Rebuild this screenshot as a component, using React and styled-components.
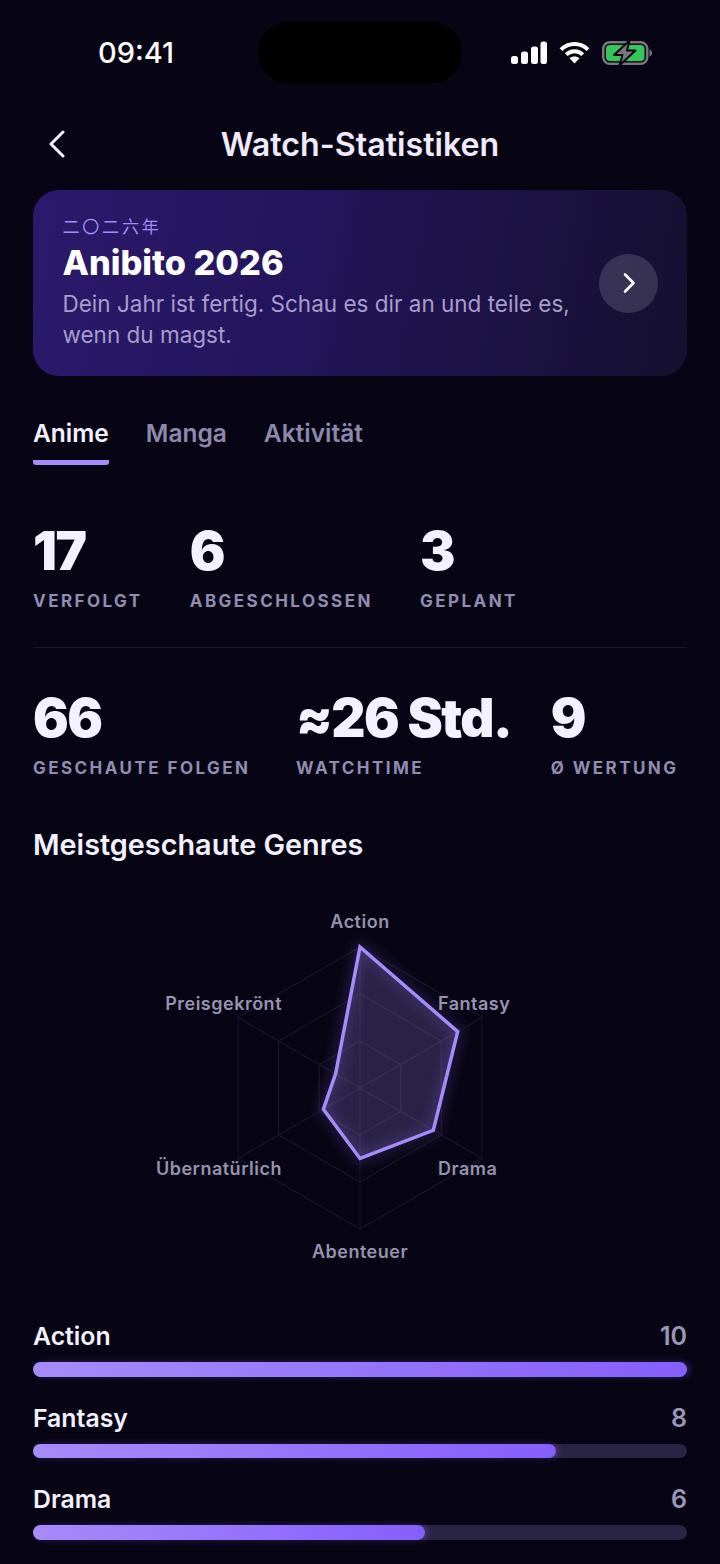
import React from "react";
import styled, { createGlobalStyle } from "styled-components";

const GlobalStyle = createGlobalStyle`
  html, body {
    margin: 0;
    padding: 0;
    background: #070514;
  }
  * {
    box-sizing: border-box;
  }
`;

const Page = styled.div`
  width: 720px;
  height: 1564px;
  overflow: hidden;
  background: #070514;
  color: #f3f0ff;
  font-family: Inter, "Noto Sans CJK SC", sans-serif;
`;

const StatusBar = styled.div`
  height: 106px;
  padding: 22px 0 0 98px;
  display: flex;
  align-items: flex-start;
`;

const Time = styled.div`
  width: 160px;
  height: 61px;
  line-height: 62px;
  font-size: 29px;
  font-weight: 500;
  color: #fff;
`;

const Island = styled.div`
  width: 204px;
  height: 61px;
  border-radius: 30px;
  background: #000;
`;

const StatusIcons = styled.div`
  margin-left: 49px;
  height: 61px;
  display: flex;
  align-items: center;
  gap: 12px;
`;

const NavBar = styled.div`
  height: 84px;
  padding: 0 33px 8px;
  display: grid;
  grid-template-columns: 60px 1fr 60px;
  align-items: center;
`;

const BackButton = styled.div`
  display: flex;
  align-items: center;
  padding-left: 15px;
`;

const NavTitle = styled.div`
  text-align: center;
  font-size: 32.2px;
  font-weight: 600;
  color: #efebfc;
`;

const Content = styled.div`
  padding: 0 33px;
`;

const YearCard = styled.div`
  height: 186px;
  border-radius: 26px;
  padding: 26px 29px 0 29.5px;
  display: flex;
  justify-content: space-between;
  align-items: center;
  background: linear-gradient(100deg, #2b1a6c 0%, #23155c 40%, #15102f 100%);
`;

const CardText = styled.div`
  align-self: flex-start;
`;

const YearLabel = styled.div`
  font-size: 17px;
  line-height: 22px;
  letter-spacing: 2.8px;
  color: #a78bfa;
`;

const CardTitle = styled.div`
  font-size: 34.3px;
  line-height: 48px;
  font-weight: 800;
  color: #fff;
  padding-top: 1px;
`;

const CardBody = styled.div`
  width: 530px;
  font-size: 22.5px;
  line-height: 31px;
  color: #a99dca;
  margin-top: 1px;
`;

const CircleButton = styled.div`
  width: 59px;
  height: 59px;
  border-radius: 50%;
  background: rgba(255, 255, 255, 0.14);
  display: flex;
  align-items: center;
  justify-content: center;
  margin-top: -26px;
  flex: none;
`;

const Tabs = styled.div`
  display: flex;
  gap: 37px;
  margin-top: 40px;
`;

const Tab = styled.div`
  font-size: 24.5px;
  line-height: 34px;
  font-weight: 600;
  padding-bottom: 10px;
  color: ${(p) => (p.$active ? "#f3f0ff" : "#8d88ae")};
  border-bottom: 5px solid ${(p) => (p.$active ? "#a78bfa" : "transparent")};
  border-radius: 0 0 3px 3px;
`;

const StatRow = styled.div`
  display: flex;
  gap: ${(p) => p.$gap}px;
  padding-top: ${(p) => p.$top}px;
  padding-bottom: ${(p) => p.$bottom}px;
  border-bottom: ${(p) => (p.$divider ? "1px solid #1b1830" : "none")};
`;

const Stat = styled.div`
  display: flex;
  flex-direction: column;
  width: ${(p) => (p.$width ? `${p.$width}px` : "auto")};
  white-space: nowrap;
`;

const StatValue = styled.div`
  font-size: 53px;
  line-height: 60px;
  font-weight: 900;
  letter-spacing: -1.5px;
  color: #f3f0ff;
`;

const StatLabel = styled.div`
  font-size: 17px;
  line-height: 24px;
  font-weight: 700;
  letter-spacing: 2.45px;
  color: #918cb2;
  margin-top: 8px;
`;

const SectionTitle = styled.div`
  font-size: 28.8px;
  line-height: 36px;
  font-weight: 600;
  color: #f3f0ff;
  margin-top: 47px;
`;

const RadarBox = styled.div`
  height: 419px;
  margin-top: 37px;
`;

const RadarLabel = styled.text`
  font-family: Inter, sans-serif;
  font-size: 18px;
  font-weight: 600;
  letter-spacing: 0.5px;
  fill: #9792b0;
`;

const BarList = styled.div`
  display: flex;
  flex-direction: column;
  gap: 24.1px;
`;

const BarHead = styled.div`
  display: flex;
  justify-content: space-between;
  align-items: center;
  height: 34px;
  margin-bottom: 9px;
`;

const BarName = styled.div`
  font-size: 24.8px;
  font-weight: 600;
  color: #f3f0ff;
`;

const BarValue = styled.div`
  font-size: 25px;
  font-weight: 600;
  color: #9b96b8;
`;

const BarTrack = styled.div`
  height: 14.6px;
  border-radius: 8px;
  background: #2a2444;
`;

const BarFill = styled.div`
  height: 100%;
  border-radius: 8px;
  background: linear-gradient(90deg, #a78bfa, #845ffc);
  box-shadow: 3px 0 6px rgba(132, 95, 252, 0.3);
`;

const SignalIcon = () => (
  <svg width="36" height="24" viewBox="0 0 36 24" fill="#fff">
    <rect x="0" y="15" width="7" height="8" rx="2.5" />
    <rect x="10" y="10.5" width="7" height="12.5" rx="2.5" />
    <rect x="20" y="5.5" width="7" height="17.5" rx="2.5" />
    <rect x="29.5" y="0.5" width="6.5" height="22.5" rx="2.5" />
  </svg>
);

const WifiIcon = () => (
  <svg width="31" height="23" viewBox="0 0 31 23" fill="none" stroke="#fff" strokeWidth="4">
    <path d="M2 8.6C9.6 1.2 21.4 1.2 29 8.6" />
    <path d="M7.2 13.6c4.8-4.4 11.8-4.4 16.6 0" />
    <path d="M15.5 22.6l-5-5.3c2.9-2.3 7.1-2.3 10 0z" fill="#fff" stroke="none" />
  </svg>
);

const BatteryIcon = () => (
  <svg width="50" height="24" viewBox="0 0 50 24">
    <rect x="1.25" y="1.25" width="44" height="21.5" rx="6.5" fill="none" stroke="#77767c" strokeWidth="2.5" />
    <rect x="4" y="4" width="38.5" height="16" rx="4" fill="#34c759" />
    <path d="M47.5 8.5c1.7.4 2.5 1.7 2.5 3.5s-.8 3.1-2.5 3.5z" fill="#77767c" />
    <path d="M27.5 -0.5L12 14h8.5L17.5 24.5 33.5 9.5h-8.5z" fill="#77767c" stroke="#070514" strokeWidth="2" strokeLinejoin="round" />
  </svg>
);

const BackIcon = () => (
  <svg width="18" height="28" viewBox="0 0 18 28" fill="none" stroke="#f3f0ff" strokeWidth="3" strokeLinecap="round" strokeLinejoin="round">
    <path d="M15 2L3 14l12 12" />
  </svg>
);

const ForwardIcon = () => (
  <svg width="14" height="22" viewBox="0 0 14 22" fill="none" stroke="#fff" strokeWidth="2.6" strokeLinecap="round" strokeLinejoin="round">
    <path d="M3 2.5L11.5 11 3 19.5" />
  </svg>
);

// radar values, clockwise from the top
const genres = [
  { name: "Action", value: 10, x: 327, y: 28, anchor: "middle" },
  { name: "Fantasy", value: 8, x: 405, y: 110, anchor: "start" },
  { name: "Drama", value: 6, x: 405, y: 275, anchor: "start" },
  { name: "Abenteuer", value: 5, x: 327, y: 358, anchor: "middle" },
  { name: "Übernatürlich", value: 3, x: 249, y: 275, anchor: "end" },
  { name: "Preisgekrönt", value: 2, x: 249, y: 110, anchor: "end" },
];

const CX = 327;
const CY = 188;
const R = 141;

const point = (i, r) => {
  const a = (Math.PI / 3) * i - Math.PI / 2;
  return `${(CX + Math.cos(a) * r).toFixed(1)},${(CY + Math.sin(a) * r).toFixed(1)}`;
};

const ring = (r) => genres.map((_, i) => point(i, r)).join(" ");

const Radar = () => (
  <svg width="654" height="400" viewBox="0 0 654 400" style={{ display: "block" }}>
    <defs>
      <filter id="glow" x="-30%" y="-30%" width="160%" height="160%">
        <feGaussianBlur stdDeviation="7" />
      </filter>
    </defs>
    {[R, (R * 2) / 3, R / 3].map((r) => (
      <polygon key={r} points={ring(r)} fill="none" stroke="#151322" strokeWidth="1.5" />
    ))}
    {genres.map((g, i) => (
      <line
        key={g.name}
        x1={CX}
        y1={CY}
        x2={point(i, R).split(",")[0]}
        y2={point(i, R).split(",")[1]}
        stroke="#151322"
        strokeWidth="1.5"
      />
    ))}
    <polygon
      points={genres.map((g, i) => point(i, (R * g.value) / 10)).join(" ")}
      fill="none"
      stroke="#8b6cf6"
      strokeOpacity="0.55"
      strokeWidth="4"
      filter="url(#glow)"
    />
    <polygon
      points={genres.map((g, i) => point(i, (R * g.value) / 10)).join(" ")}
      fill="rgba(167, 139, 250, 0.22)"
      stroke="#a78bfa"
      strokeWidth="3.5"
      strokeLinejoin="miter"
    />
    {genres.map((g) => (
      <RadarLabel key={g.name} x={g.x} y={g.y} textAnchor={g.anchor}>
        {g.name}
      </RadarLabel>
    ))}
  </svg>
);

const bars = [
  { name: "Action", value: 10 },
  { name: "Fantasy", value: 8 },
  { name: "Drama", value: 6 },
];

export default function App() {
  return (
    <Page>
      <GlobalStyle />
      <StatusBar>
        <Time>09:41</Time>
        <Island />
        <StatusIcons>
          <SignalIcon />
          <WifiIcon />
          <BatteryIcon />
        </StatusIcons>
      </StatusBar>
      <NavBar>
        <BackButton>
          <BackIcon />
        </BackButton>
        <NavTitle>Watch-Statistiken</NavTitle>
      </NavBar>
      <Content>
        <YearCard>
          <CardText>
            <YearLabel>二〇二六年</YearLabel>
            <CardTitle>Anibito 2026</CardTitle>
            <CardBody>Dein Jahr ist fertig. Schau es dir an und teile es, wenn du magst.</CardBody>
          </CardText>
          <CircleButton>
            <ForwardIcon />
          </CircleButton>
        </YearCard>
        <Tabs>
          <Tab $active>Anime</Tab>
          <Tab>Manga</Tab>
          <Tab>Aktivität</Tab>
        </Tabs>
        <StatRow $gap={47.2} $top={56} $bottom={34} $divider>
          <Stat>
            <StatValue>17</StatValue>
            <StatLabel>VERFOLGT</StatLabel>
          </Stat>
          <Stat>
            <StatValue>6</StatValue>
            <StatLabel>ABGESCHLOSSEN</StatLabel>
          </Stat>
          <Stat>
            <StatValue>3</StatValue>
            <StatLabel>GEPLANT</StatLabel>
          </Stat>
        </StatRow>
        <StatRow $gap={45.6} $top={40} $bottom={0}>
          <Stat>
            <StatValue>66</StatValue>
            <StatLabel>GESCHAUTE FOLGEN</StatLabel>
          </Stat>
          <Stat $width={209}>
            <StatValue>≈26 Std.</StatValue>
            <StatLabel>WATCHTIME</StatLabel>
          </Stat>
          <Stat>
            <StatValue>9</StatValue>
            <StatLabel>Ø WERTUNG</StatLabel>
          </Stat>
        </StatRow>
        <SectionTitle>Meistgeschaute Genres</SectionTitle>
        <RadarBox>
          <Radar />
        </RadarBox>
        <BarList>
          {bars.map((b) => (
            <div key={b.name}>
              <BarHead>
                <BarName>{b.name}</BarName>
                <BarValue>{b.value}</BarValue>
              </BarHead>
              <BarTrack>
                <BarFill style={{ width: `${b.value * 10}%` }} />
              </BarTrack>
            </div>
          ))}
        </BarList>
      </Content>
    </Page>
  );
}
